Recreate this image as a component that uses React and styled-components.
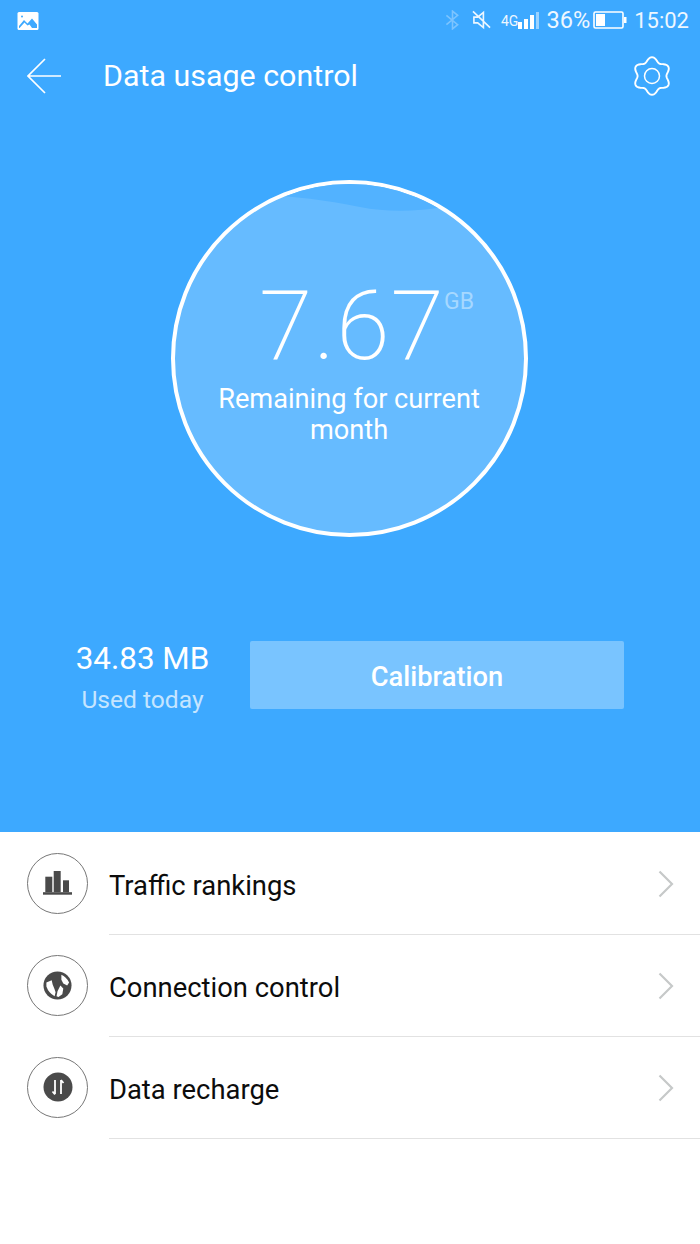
import React from "react";
import styled, { createGlobalStyle } from "styled-components";

const Global = createGlobalStyle`
  html, body { margin: 0; padding: 0; background: #fff; }
  body { font-family: Roboto, "Liberation Sans", sans-serif; }
  * { box-sizing: border-box; }
`;

const Page = styled.div`
  width: 700px;
  height: 1244px;
  overflow: hidden;
  background: #fff;
  display: flex;
  flex-direction: column;
`;
const Hero = styled.section`
  height: 832px;
  background: #3da9ff;
  color: #fff;
  display: flex;
  flex-direction: column;
`;
const StatusBar = styled.div`
  height: 40px;
  display: flex;
  align-items: center;
  padding: 0 11px 0 17px;
`;
const StatusRight = styled.div`
  margin-left: auto;
  display: flex;
  align-items: center;
`;
const StatusText = styled.span`
  font-size: ${(p) => p.$size || 22}px;
  color: #eef7ff;
  margin-left: ${(p) => p.$ml || 0}px;
  padding-top: 2px;
  line-height: 1;
`;
const Header = styled.header`
  height: 72px;
  display: flex;
  align-items: center;
  padding: 0 27px;
`;
const Title = styled.h1`
  margin: 0 0 0 42px;
  font-size: 30.4px;
  font-weight: 400;
  line-height: 1;
`;
const GearWrap = styled.div`
  margin-left: auto;
  display: flex;
  margin-right: 1px;
`;
const CircleRow = styled.div`
  display: flex;
  justify-content: center;
  margin-top: 68px;
  padding-right: 2px;
`;
const Gauge = styled.div`
  position: relative;
  width: 357px;
  height: 357px;
  border-radius: 50%;
  border: 4px solid #fff;
  background: #66bbff;
  overflow: hidden;
  display: flex;
  flex-direction: column;
  align-items: center;
`;
const Wave = styled.svg`
  position: absolute;
  left: 0;
  top: 0;
`;
const Amount = styled.div`
  position: relative;
  margin: 94px 0 0 6px;
  font-size: 97px;
  font-weight: 200;
  line-height: 1;
  letter-spacing: 1px;
`;
const Unit = styled.span`
  position: absolute;
  left: 185px;
  top: 12px;
  font-size: 23px;
  font-weight: 400;
  letter-spacing: 0;
  color: #a6d8ff;
  line-height: 1;
`;
const Caption = styled.div`
  width: 290px;
  margin-top: 9px;
  font-size: 27.2px;
  line-height: 31px;
  text-align: center;
`;
const Stats = styled.div`
  display: flex;
  align-items: flex-start;
  margin-top: 104px;
  padding-left: 75px;
`;
const Today = styled.div`
  width: 135px;
  padding-top: 1px;
  display: flex;
  flex-direction: column;
  align-items: center;
`;
const TodayValue = styled.div`
  font-size: 31.4px;
  line-height: 34px;
  white-space: nowrap;
`;
const TodayLabel = styled.div`
  font-size: 24.6px;
  line-height: 28px;
  margin-top: 10px;
  color: #c5e5ff;
  white-space: nowrap;
`;
const CalibrateButton = styled.button`
  width: 374px;
  height: 68px;
  margin-left: 40px;
  padding: 3px 0 0;
  border: 0;
  border-radius: 2px;
  background: #79c4ff;
  color: #fff;
  font: 500 27.3px Roboto, sans-serif;
`;
const List = styled.ul`
  list-style: none;
  margin: 0;
  padding: 1px 0 0;
`;
const Row = styled.li`
  height: 102px;
  display: flex;
  align-items: center;
  padding-left: 27px;
`;
const IconCircle = styled.div`
  width: 61px;
  height: 61px;
  flex: none;
  border-radius: 50%;
  border: 1.5px solid #777;
  display: flex;
  align-items: center;
  justify-content: center;
  margin-bottom: 2px;
`;
const RowBody = styled.div`
  flex: 1;
  align-self: stretch;
  margin-left: 21px;
  display: flex;
  align-items: center;
  border-bottom: 1px solid #e2e2e2;
  padding-right: 26px;
`;
const RowLabel = styled.span`
  font-size: 27.4px;
  color: #0c0c0c;
  flex: 1;
  padding-top: 4px;
`;

const gearPath = (() => {
  const pts = [];
  for (let i = 0; i < 120; i++) {
    const t = (i / 120) * Math.PI * 2;
    const r = 16.6 + 2.2 * Math.cos(6 * t);
    const a = t - Math.PI / 2;
    pts.push(`${(20 + r * Math.cos(a)).toFixed(2)} ${(20 + r * Math.sin(a)).toFixed(2)}`);
  }
  return `M${pts.join("L")}Z`;
})();

const Photo = () => (
  <svg width="22" height="18" viewBox="0 0 22 18" style={{ marginTop: 1 }}>
    <rect width="21" height="18" x="0.5" rx="1.5" fill="#fff" />
    <path d="M2 14l5-6 3.5 3.5L15 6.500l5 6v3.500H2z" fill="#3da9ff" />
    <path d="M2.500 16l5-5.500 3 3 2-1 2.500 3.500z" fill="#fff" />
    <circle cx="5" cy="4.500" r="1" fill="#3da9ff" />
  </svg>
);
const Bluetooth = () => (
  <svg width="15" height="20" viewBox="0 0 16 20" fill="none" stroke="#7cc4ff" strokeWidth="1.7" style={{ display: "block" }}>
    <path d="M1.500 5l12 10-5.500 4.500V.5l5.500 4.500-12 10" />
  </svg>
);
const Mute = () => (
  <svg width="19" height="20" viewBox="0 0 20 20" fill="none" stroke="#eef7ff" strokeWidth="1.7" style={{ marginLeft: 12 }}>
    <path d="M2 7v6h4l6 5V2L6 7zM1 1l18 17" />
  </svg>
);
const Signal = () => (
  <svg width="21" height="17" viewBox="0 0 21 17">
    <rect x="0" y="10" width="4" height="7" fill="#fff" />
    <rect x="6" y="7" width="4" height="10" fill="#fff" />
    <rect x="12" y="3" width="4" height="14" fill="#fff" />
    <rect x="18" y="0" width="3" height="17" fill="#9ad2ff" />
  </svg>
);
const Battery = () => (
  <svg width="34" height="18" viewBox="0 0 34 18" style={{ marginLeft: 3 }}>
    <rect x="1" y="1" width="29" height="16" rx="1.500" fill="none" stroke="#fff" strokeWidth="1.600" />
    <rect x="3" y="3" width="9" height="12" fill="#fff" />
    <rect x="31" y="6" width="2.500" height="6" fill="#fff" />
  </svg>
);
const Back = () => (
  <svg width="34" height="36" viewBox="0 0 34 36" fill="none" stroke="#fff" strokeWidth="1.700">
    <path d="M34 18H1M18 1L1 18l17 17" />
  </svg>
);
const Gear = () => (
  <svg width="40" height="40" viewBox="0 0 40 40" fill="none" stroke="#fff" strokeWidth="1.900">
    <path d={gearPath} strokeLinejoin="round" />
    <circle cx="20" cy="20" r="7.500" strokeWidth="1.500" />
  </svg>
);
const Bars = () => (
  <svg width="29" height="24" viewBox="0 0 29 24" fill="#4a4a4a">
    <rect x="2.300" y="5.700" width="7" height="15.500" />
    <rect x="10.700" y="0" width="7" height="21.200" />
    <rect x="20" y="9.300" width="6" height="11.900" />
    <rect x="0" y="21.200" width="29" height="2.500" />
  </svg>
);
const Globe = () => (
  <svg width="29" height="29" viewBox="0 0 30 30">
    <circle cx="15" cy="15" r="14.500" fill="#4a4a4a" />
    <path d="M3.500 12L9 9.500 10 14 12 19 13 22 12 26Q6 23 3.500 16ZM19 4Q24 6 27 12L25 15 21 13 19 9ZM18 15L21 18 20 24 16 27 14 26 15 21Z" fill="#fff" />
  </svg>
);
const Transfer = () => (
  <svg width="30" height="30" viewBox="0 0 30 30">
    <circle cx="15" cy="15" r="14.500" fill="#4a4a4a" />
    <path d="M12 8v14M9.500 19.500L12 22.500M18 22V8M18 8l2.500 3" fill="none" stroke="#fff" strokeWidth="1.800" />
  </svg>
);
const Chevron = () => (
  <svg width="16" height="28" viewBox="0 0 16 28" fill="none" stroke="#c6c9c9" strokeWidth="2.200">
    <path d="M1.500 1.500L14 14 1.500 26.500" />
  </svg>
);

const rows = [
  { label: "Traffic rankings", Icon: Bars },
  { label: "Connection control", Icon: Globe },
  { label: "Data recharge", Icon: Transfer },
];

export default function App() {
  return (
    <Page>
      <Global />
      <Hero>
        <StatusBar>
          <Photo />
          <StatusRight>
            <Bluetooth />
            <Mute />
            <StatusText $size={14} $ml={10}>4G</StatusText>
            <Signal />
            <StatusText $size={23.6} $ml={7}>36%</StatusText>
            <Battery />
            <StatusText $ml={7}>15:02</StatusText>
          </StatusRight>
        </StatusBar>
        <Header>
          <Back />
          <Title>Data usage control</Title>
          <GearWrap><Gear /></GearWrap>
        </Header>
        <CircleRow>
          <Gauge>
            <Wave width="349" height="60" viewBox="0 0 349 60">
              <path d="M85 11C120 12 150 16 185 23C210 28 240 28 268 23L268 0L85 0Z" fill="#52b2ff" />
            </Wave>
            <Amount>
              7.67
              <Unit>GB</Unit>
            </Amount>
            <Caption>Remaining for current month</Caption>
          </Gauge>
        </CircleRow>
        <Stats>
          <Today>
            <TodayValue>34.83 MB</TodayValue>
            <TodayLabel>Used today</TodayLabel>
          </Today>
          <CalibrateButton>Calibration</CalibrateButton>
        </Stats>
      </Hero>
      <List>
        {rows.map(({ label, Icon }) => (
          <Row key={label}>
            <IconCircle><Icon /></IconCircle>
            <RowBody>
              <RowLabel>{label}</RowLabel>
              <Chevron />
            </RowBody>
          </Row>
        ))}
      </List>
    </Page>
  );
}
